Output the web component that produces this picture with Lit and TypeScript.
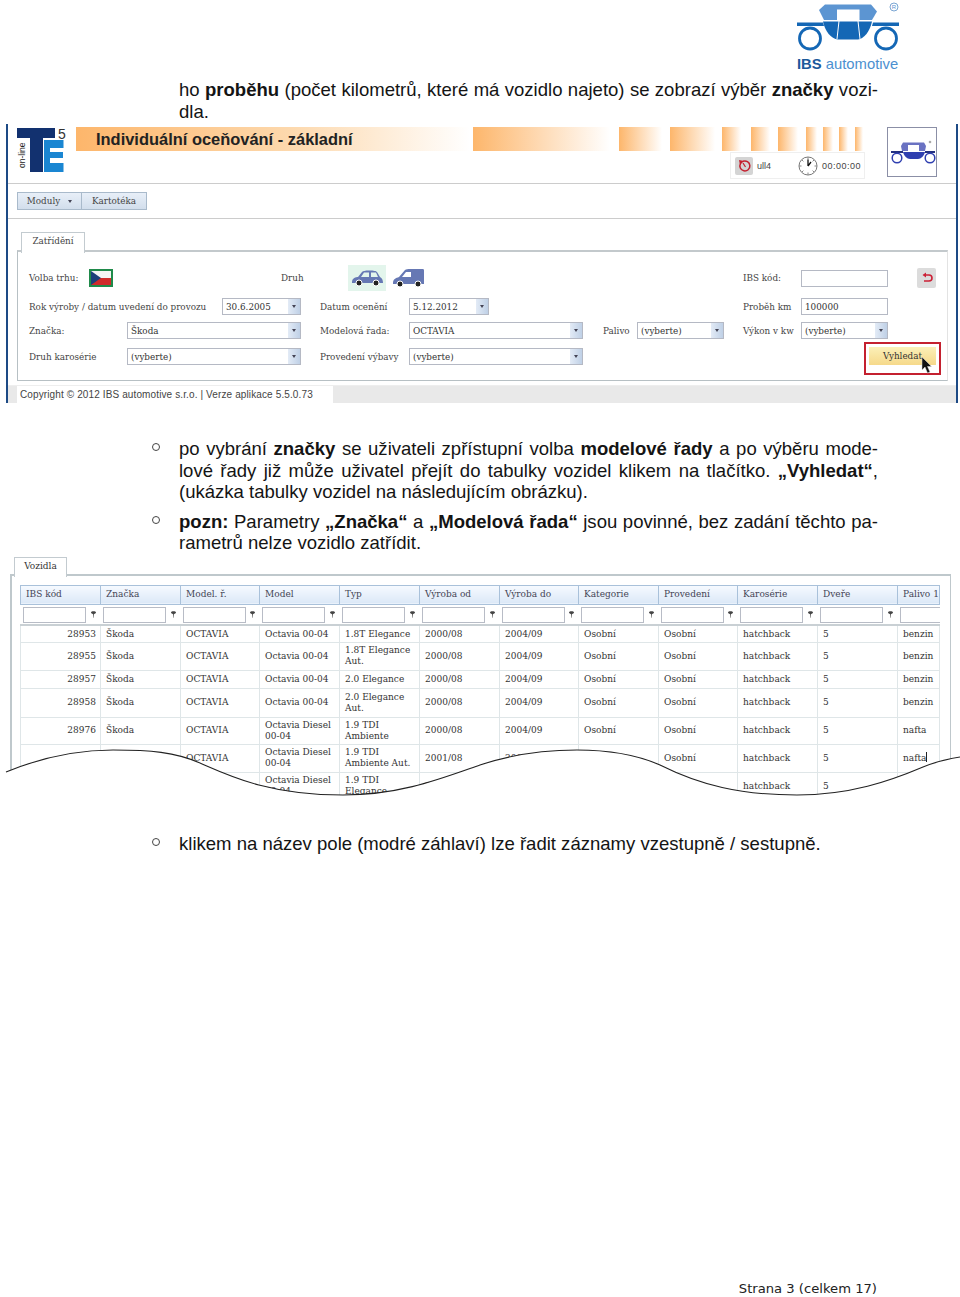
import { LitElement, html, css, svg } from "lit";
import { customElement } from "lit/decorators.js";

const COLS = [80, 80, 79, 80, 80, 80, 79, 80, 79, 80, 80, 42];
const HEAD = ["IBS kód", "Značka", "Model. ř.", "Model", "Typ", "Výroba od", "Výroba do", "Kategorie", "Provedení", "Karosérie", "Dveře", "Palivo 1"];
const ROWS: { h: number; cells: string[] }[] = [
  { h: 17, cells: ["28953", "Škoda", "OCTAVIA", "Octavia 00-04", "1.8T Elegance", "2000/08", "2004/09", "Osobní", "Osobní", "hatchback", "5", "benzin"] },
  { h: 28, cells: ["28955", "Škoda", "OCTAVIA", "Octavia 00-04", "1.8T Elegance\nAut.", "2000/08", "2004/09", "Osobní", "Osobní", "hatchback", "5", "benzin"] },
  { h: 18, cells: ["28957", "Škoda", "OCTAVIA", "Octavia 00-04", "2.0 Elegance", "2000/08", "2004/09", "Osobní", "Osobní", "hatchback", "5", "benzin"] },
  { h: 29, cells: ["28958", "Škoda", "OCTAVIA", "Octavia 00-04", "2.0 Elegance\nAut.", "2000/08", "2004/09", "Osobní", "Osobní", "hatchback", "5", "benzin"] },
  { h: 27, cells: ["28976", "Škoda", "OCTAVIA", "Octavia Diesel\n00-04", "1.9 TDI\nAmbiente", "2000/08", "2004/09", "Osobní", "Osobní", "hatchback", "5", "nafta"] },
  { h: 28, cells: ["28977", "Škoda", "OCTAVIA", "Octavia Diesel\n00-04", "1.9 TDI\nAmbiente Aut.", "2001/08", "2004/09", "Osobní", "Osobní", "hatchback", "5", "nafta"] },
  { h: 28, cells: ["28978", "Škoda", "OCTAVIA", "Octavia Diesel\n00-04", "1.9 TDI\nElegance", "2000/08", "2004/09", "Osobní", "Osobní", "hatchback", "5", "nafta"] },
];
const BARS = [[473, 610], [619, 662], [670, 715], [722, 741], [751, 770], [778, 798], [806, 817], [823, 833], [839, 848], [855, 863]];

const logoLarge = svg`
  <path d="M39 10 L45 4.5 H91 L97 11.5 L92 20 H44 Z" fill="#5c95d2"/>
  <rect x="57" y="9.5" width="22.500" height="11" fill="#fff"/>
  <path d="M43 21.5 H92 C90 31 84 39 78 39.5 H58 C51 39 45 31 43 21.5 Z" fill="#1467b5"/>
  <path d="M59 21 L57 39 M78 21 L80 39" stroke="#fff" stroke-width="1"/>
  <path d="M17 22.5 H43 L44 26 H17 Z M93 22.5 H119 V26 H92 Z" fill="#1467b5"/>
  <circle cx="30" cy="38.500" r="10.500" fill="none" stroke="#1467b5" stroke-width="2.800"/>
  <circle cx="106" cy="38.500" r="10.500" fill="none" stroke="#1467b5" stroke-width="2.800"/>
  <circle cx="114" cy="7" r="4" fill="none" stroke="#7aa6d3" stroke-width="1"/>
  <text x="114" y="9" font-size="6" text-anchor="middle" fill="#5c95d2" font-family="Liberation Sans">R</text>
  <text x="17" y="69" font-size="14.800" font-family="Liberation Sans" fill="#4b90d0"><tspan font-weight="700" fill="#1c5a9b">IBS</tspan> automotive</text>
`;

const logoSmall = svg`
  <path d="M13 18 L15 14.500 H36 L38 18 L37 23 H14 Z" fill="#6a72c2"/>
  <rect x="20" y="17" width="11" height="6" fill="#fff"/>
  <path d="M15 24 H37 C36 28 33 31 30 31 H22 C19 31 16 28 15 24 Z" fill="#2f3fb0"/>
  <path d="M3 23 H15 V25 H3 Z M37 23 H47 V25 H37 Z" fill="#23307f"/>
  <circle cx="9" cy="30" r="4.800" fill="#fff" stroke="#2f3fb0" stroke-width="1.500"/>
  <circle cx="42" cy="30" r="4.800" fill="#fff" stroke="#2f3fb0" stroke-width="1.500"/>
  <circle cx="42" cy="14" r="1.300" fill="#aaa"/>
`;

const funnel = html`<svg class="funnel" width="5" height="7" viewBox="0 0 5 7"><path d="M0 1.500 C0 -0.300 5 -0.300 5 1.500 C5 2.500 3.200 2.800 2.900 3.200 L2.700 6.800 H2.300 L2.100 3.200 C1.800 2.800 0 2.500 0 1.500 Z" fill="#444"/></svg>`;

@customElement("app-root")
export class AppRoot extends LitElement {
  static styles = css`
    :host { display: block; }
    .page { width: 960px; height: 1297px; display: flex; flex-direction: column; background: #fff; color: #141414; font-family: "Liberation Sans", Arial, sans-serif; font-size: 18.55px; line-height: 21.6px; overflow: hidden; }
    .head { height: 79px; display: flex; justify-content: flex-end; padding-right: 50px; box-sizing: border-box; flex: none; }
    .head svg { display: block; }
    .para { margin: 0 82px 0 179px; flex: none; height: 45px; }
    .ln { display: block; text-align: justify; text-align-last: justify; white-space: nowrap; }
    .ln.end { text-align-last: left; }
    b { font-weight: 700; }

    .shot1 { margin-left: 6px; width: 952px; height: 279px; box-sizing: border-box; border-left: 2px solid #1d4a85; border-right: 2px solid #1d4a85; flex: none; font-family: "DejaVu Serif", serif; font-size: 8.8px; color: #444; display: flex; flex-direction: column; }
    .hdr { height: 60px; box-sizing: border-box; border-bottom: 1px solid #ccc; display: flex; padding: 3px 0 0 9px; flex: none; }
    .te { display: block; flex: none; }
    .hdr-mid { margin-left: 9px; width: 787px; flex: none; display: flex; flex-direction: column; }
    .band { display: flex; height: 24px; flex: none; }
    .title { width: 394px; flex: none; box-sizing: border-box; padding-left: 20px; font: 700 16.450px/24px "Liberation Sans", sans-serif; color: #222; background: linear-gradient(90deg, #fdb66b 0%, #fdd9ae 55%, #fff 100%); }
    .bar { flex: none; background: linear-gradient(90deg, #fdb66b, #fff); }
    .timer { align-self: flex-end; margin: 1px -2px 0 0; width: 135px; height: 27px; box-sizing: border-box; border: 1px solid #efefef; display: flex; align-items: center; font: 9px "Liberation Sans", sans-serif; color: #444; letter-spacing: 0.5px; padding-left: 4px; }
    .undo { width: 18px; height: 18px; flex: none; background: #d4d4d4; border-radius: 2px; display: flex; align-items: center; justify-content: center; }
    .user { margin-left: 4px; width: 41px; flex: none; letter-spacing: 0; }
    .clock { flex: none; margin-right: 4px; }
    .mark { margin: 0 0 0 24px; width: 50px; height: 50px; box-sizing: border-box; border: 1px solid #8b8fa6; flex: none; }
    .mark svg { display: block; }

    .tools { height: 35px; box-sizing: border-box; border-bottom: 1px solid #ccc; padding: 8px 0 0 9px; display: flex; flex: none; line-height: 11px; }
    .tools .btn { height: 18px; box-sizing: border-box; border: 1px solid #a9bacb; background: linear-gradient(#e8eff8, #d2deec); display: flex; align-items: center; justify-content: center; gap: 8px; margin-right: -1px; }
    .tri { width: 0; height: 0; border-left: 2.500px solid transparent; border-right: 2.500px solid transparent; border-top: 3px solid #445; display: block; }

    .tabs { height: 31px; box-sizing: border-box; padding: 13px 0 0 13px; display: flex; flex: none; }
    .tab { height: 21px; width: 64px; flex: none; box-sizing: border-box; border: 1px solid #c3cbd0; border-bottom: none; background: #fff; text-align: center; line-height: 17px; position: relative; z-index: 1; }
    .panel { margin-left: 9px; width: 931px; height: 131px; box-sizing: border-box; border: 1px solid #b7c0c4; border-top: 2px solid #c3c9cc; border-right-color: #e3e3e3; padding: 13px 0 0 11px; flex: none; display: grid; grid-template-columns: 98px 95px 79px 19px 89px 80px 94px 20px 34px 87px 19px 58px 87px 29px 19px; grid-template-rows: 26px 31px 17px 35px; align-items: center; line-height: 12px; }
    .flag { display: block; }
    .cars { display: flex; align-items: center; gap: 6px; }
    .car-on { width: 38px; height: 26px; background: #e3f5ec; display: flex; align-items: center; justify-content: center; flex: none; }
    .field { height: 17px; box-sizing: border-box; border: 1px solid #b5b9c4; background: #fff; display: flex; align-items: center; padding-left: 3px; color: #333; overflow: hidden; }
    .combo { padding-right: 0; justify-content: space-between; }
    .arr { width: 12px; height: 17px; flex: none; background: linear-gradient(90deg, #e3ebf6, #bfd0e6); display: flex; align-items: center; justify-content: center; }
    .back { width: 19px; height: 20px; background: #dcdcdc; border-radius: 2px; display: flex; align-items: center; justify-content: center; }
    .redbox { position: relative; align-self: start; margin: 3px -5px 0 63px; height: 33px; box-sizing: border-box; border: 2px solid #c4202f; padding: 3px; }
    .find { height: 18px; background: linear-gradient(#fbf0b8, #f6d98a); text-align: center; line-height: 18px; color: #333; }
    .cursor { position: absolute; left: 55px; top: 13px; }

    .gap1 { height: 4px; flex: none; }
    .foot1 { height: 18px; background: #e9e9e9; border-top: 1px solid #eee; box-sizing: border-box; padding-left: 9px; flex: none; display: flex; }
    .copy { width: 316px; background: #fff; padding-left: 3px; box-sizing: border-box; font: 10px/18px "Liberation Sans", sans-serif; letter-spacing: 0.12px; color: #444; }

    .items { list-style: none; margin: 35px 82px 0 0; padding: 0; flex: none; }
    .items li { display: flex; margin-bottom: 8px; }
    .items li:last-child { margin-bottom: 0; }
    .mk { width: 152px; flex: none; box-sizing: border-box; text-align: right; font-size: 13px; }
    .mk span { display: inline-block; width: 8px; height: 8px; box-sizing: border-box; border: 1px solid #444; border-radius: 50%; margin: 0 -8px 2px 0; }
    .tx { margin-left: 27px; flex: 1; min-width: 0; }

    .shot2 { position: relative; margin-top: 3px; height: 243px; flex: none; overflow: hidden; font-family: "DejaVu Serif", serif; font-size: 9px; color: #333; line-height: 11px; }
    .tab2 { margin-left: 14px; width: 53px; height: 20px; box-sizing: border-box; border: 1px solid #c3cbd0; border-bottom: none; text-align: center; line-height: 17px; position: relative; z-index: 1; background: #fff; }
    .panel2 { margin: -3px 0 0 10px; width: 941px; height: 240px; box-sizing: border-box; border: 1px solid #bfc8cc; border-top-width: 2px; border-left-width: 2px; padding: 9px 0 0 8px; }
    table { table-layout: fixed; border-collapse: collapse; width: 920px; }
    th { height: 19px; box-sizing: border-box; padding: 0 5px; text-align: left; font-weight: 400; background: linear-gradient(#f6faff, #dbe8f7); border: 1px solid #a9c1da; white-space: nowrap; overflow: hidden; color: #445; }
    td { box-sizing: border-box; padding: 0 5px; border: 1px solid #dfe6e8; white-space: pre; overflow: hidden; }
    td.num { text-align: right; padding-right: 4px; }
    .frow td { height: 21px; padding: 0 2px 0 2.500px; border-bottom: 2px solid #c9d0d4; border-left: none; border-right: none; }
    .fcell { display: flex; align-items: center; justify-content: space-between; padding-right: 3px; }
    .fcell i { display: block; width: 63px; height: 16px; box-sizing: border-box; border: 1px solid #b8bcc6; background: #fff; flex: none; }
    .funnel { display: block; flex: none; }
    .caret { display: inline-block; width: 1px; height: 10px; background: #222; vertical-align: -1px; }
    .wave { position: absolute; left: 0; top: 180px; display: block; }

    .items3 { margin-top: 33px; }
    .foot { margin-top: auto; padding: 0 83px 0 0; text-align: right; font: 13.150px/17px "DejaVu Sans", sans-serif; height: 17px; flex: none; color: #222; }
  `;

  private combo(v: string) {
    return html`<div class="field combo"><span>${v}</span><span class="arr"><span class="tri"></span></span></div>`;
  }

  private form() {
    const g = (c: string, r: number) => `grid-column:${c};grid-row:${r}`;
    return html`
      <div style=${g("1", 1)}>Volba trhu:</div>
      <svg class="flag" style=${g("1 / 3", 1) + ";margin-left:60px"} width="24" height="18" viewBox="0 0 24 18"><rect width="24" height="18" fill="#1f8a4a"/><rect x="2" y="2" width="20" height="7" fill="#f4f4f4"/><rect x="2" y="9" width="20" height="7" fill="#cf2a2a"/><path d="M2 2 L12 9 L2 16 Z" fill="#1c3f7a"/></svg>
      <div style=${g("3 / 5", 1) + ";margin-left:59px"}>Druh</div>
      <div class="cars" style=${g("5 / 8", 1) + ";margin-left:28px"}>
        <span class="car-on"><svg width="33" height="18" viewBox="0 0 33 18"><path d="M1 13 C1 9 5 8 7 8 L11 3 C12 2 14 1.500 18 1.500 C23 1.500 25 2 26 3 L29 8 C31 9 32 11 32 14 L1 14 Z" fill="#6678b4"/><path d="M10 8 L13 3.500 H18 V8 Z M20 3.500 H25 L27 8 H20 Z" fill="#e3f5ec"/><circle cx="8" cy="14" r="3" fill="#222" stroke="#fff"/><circle cx="25" cy="14" r="3" fill="#222" stroke="#fff"/></svg></span>
        <svg width="33" height="20" viewBox="0 0 33 20"><path d="M1 15 C1 11 4 10 7 9 L13 2 C14 1 16 1 18 1 H31 C32 1 32 2 32 3 V16 H1 Z" fill="#6678b4"/><path d="M10 9 L14 4 H19 V9 Z" fill="#fff"/><circle cx="8" cy="16" r="3" fill="#222" stroke="#fff"/><circle cx="26" cy="16" r="3" fill="#222" stroke="#fff"/></svg>
      </div>
      <div style=${g("12", 1)}>IBS kód:</div>
      <div class="field" style=${g("13", 1)}></div>
      <div class="back" style=${g("15", 1)}><svg width="12" height="12" viewBox="0 0 12 12"><path d="M4 3 H8 A3 3 0 0 1 8 9 H3" fill="none" stroke="#cc2036" stroke-width="1.600"/><path d="M5 0.500 L1.500 3 L5 5.500 Z" fill="#cc2036"/></svg></div>

      <div style=${g("1 / 3", 2) + ";white-space:nowrap"}>Rok výroby / datum uvedení do provozu</div>
      <div style=${g("3", 2)}>${this.combo("30.6.2005")}</div>
      <div style=${g("5", 2)}>Datum ocenění</div>
      <div style=${g("6", 2)}>${this.combo("5.12.2012")}</div>
      <div style=${g("12", 2)}>Proběh km</div>
      <div class="field" style=${g("13", 2)}>100000</div>

      <div style=${g("1", 3)}>Značka:</div>
      <div style=${g("2 / 4", 3)}>${this.combo("Škoda")}</div>
      <div style=${g("5", 3)}>Modelová řada:</div>
      <div style=${g("6 / 8", 3)}>${this.combo("OCTAVIA")}</div>
      <div style=${g("9", 3)}>Palivo</div>
      <div style=${g("10", 3)}>${this.combo("(vyberte)")}</div>
      <div style=${g("12", 3) + ";white-space:nowrap"}>Výkon v kw</div>
      <div style=${g("13", 3)}>${this.combo("(vyberte)")}</div>

      <div style=${g("1", 4)}>Druh karosérie</div>
      <div style=${g("2 / 4", 4)}>${this.combo("(vyberte)")}</div>
      <div style=${g("5", 4)}>Provedení výbavy</div>
      <div style=${g("6 / 8", 4)}>${this.combo("(vyberte)")}</div>
      <div class="redbox" style=${g("13 / 16", 4)}>
        <div class="find">Vyhledat</div>
        <svg class="cursor" width="12" height="17" viewBox="0 0 12 17"><path d="M1 0 V13 L4 10 L6.500 16 L9 15 L6.500 9.500 L10.500 9.500 Z" fill="#111" stroke="#ddd" stroke-width="0.500"/></svg>
      </div>
    `;
  }

  private table() {
    return html`<table>
      <colgroup>${COLS.map((w) => html`<col style="width:${w}px" />`)}</colgroup>
      <thead><tr>${HEAD.map((h) => html`<th>${h}</th>`)}</tr></thead>
      <tbody>
        <tr class="frow">${COLS.map(() => html`<td><div class="fcell"><i></i>${funnel}</div></td>`)}</tr>
        ${ROWS.map((r, ri) => html`<tr>${r.cells.map((c, i) => html`<td class=${i === 0 ? "num" : ""} style="height:${r.h}px">${c}${ri === 5 && i === 11 ? html`<span class="caret"></span>` : ""}</td>`)}</tr>`)}
      </tbody>
    </table>`;
  }

  render() {
    return html`<div class="page">
      <div class="head">
        <svg width="130" height="74" viewBox="0 0 130 74">${logoLarge}</svg>
      </div>
      <div class="para">
        <span class="ln">ho <b>proběhu</b> (počet kilometrů, které má vozidlo najeto) se zobrazí výběr <b>značky</b> vozi-</span>
        <span class="ln end">dla.</span>
      </div>

      <div class="shot1">
        <div class="hdr">
          <svg class="te" width="50" height="46" viewBox="0 0 50 46">
            <path d="M0 1 H38 V11 H26 V45 H13 V11 H0 Z" fill="#12316f"/>
            <path d="M27 13 H46.500 V21 H33 V25 H46 V31 H33 V36 H46.500 V45 H27 Z" fill="#1a86d2"/>
            <text x="41" y="11.500" font-size="14" fill="#333" font-family="Liberation Sans">5</text>
            <text transform="translate(8 41) rotate(-90)" font-size="8.500" fill="#222" font-family="Liberation Sans">on-line</text>
          </svg>
          <div class="hdr-mid">
            <div class="band">
              <div class="title">Individuální oceňování - základní</div>
              ${BARS.map(([a, b], i) => html`<div class="bar" style="margin-left:${a - (i ? BARS[i - 1][1] : 470)}px;width:${b - a}px"></div>`)}
            </div>
            <div class="timer">
              <span class="undo"><svg width="14" height="14" viewBox="0 0 14 14"><path d="M3.500 4.500 A5 5 0 1 0 6 2.300" fill="none" stroke="#c4202f" stroke-width="1.500"/><path d="M2 1 L7 2 L3 6 Z" fill="#c4202f"/><path d="M6 4 L8.500 8" stroke="#c4202f" stroke-width="1.200"/></svg></span>
              <span class="user">ull4</span>
              <svg class="clock" width="20" height="20" viewBox="0 0 20 20"><circle cx="10" cy="10" r="9" fill="#fff" stroke="#555" stroke-width="0.800"/><path d="M10 1.500 V3.500 M10 16.500 V18.500 M1.500 10 H3.500 M16.500 10 H18.500 M4 4 L5.400 5.400 M16 4 L14.600 5.400 M4 16 L5.400 14.600 M16 16 L14.600 14.600" stroke="#555" stroke-width="0.700"/><path d="M10 10 V3.500 M10 10 L13 6" stroke="#111" stroke-width="1.300"/></svg>
              <span>00:00:00</span>
            </div>
          </div>
          <div class="mark"><svg width="48" height="48" viewBox="0 0 48 48">${logoSmall}</svg></div>
        </div>
        <div class="tools">
          <div class="btn" style="width:65px"><span>Moduly</span><span class="tri"></span></div>
          <div class="btn" style="width:66px"><span>Kartotéka</span></div>
        </div>
        <div class="tabs"><div class="tab">Zatřídění</div></div>
        <div class="panel">${this.form()}</div>
        <div class="gap1"></div>
        <div class="foot1"><div class="copy">Copyright © 2012 IBS automotive s.r.o. | Verze aplikace 5.5.0.73</div></div>
      </div>

      <ul class="items">
        <li>
          <div class="mk"><span></span></div>
          <div class="tx">
            <span class="ln">po vybrání <b>značky</b> se uživateli zpřístupní volba <b>modelové řady</b> a po výběru mode-</span>
            <span class="ln">lové řady již může uživatel přejít do tabulky vozidel klikem na tlačítko. <b>„Vyhledat“</b>,</span>
            <span class="ln end">(ukázka tabulky vozidel na následujícím obrázku).</span>
          </div>
        </li>
        <li>
          <div class="mk"><span></span></div>
          <div class="tx">
            <span class="ln"><b>pozn:</b> Parametry <b>„Značka“</b> a <b>„Modelová řada“</b> jsou povinné, bez zadání těchto pa-</span>
            <span class="ln end">rametrů nelze vozidlo zatřídit.</span>
          </div>
        </li>
      </ul>

      <div class="shot2">
        <div class="tab2">Vozidla</div>
        <div class="panel2">${this.table()}</div>
        <svg class="wave" width="960" height="63" viewBox="0 180 960 63"><path d="M6 215 C40 201 75 193 113 193 C150 193 175 195 200 206 C232 220 270 238 343 238 C400 238 440 222 480 208 C510 198 540 193 577 193 C610 193 635 197 660 208 C700 228 740 238 797 238 C850 238 890 224 923 210 C935 205 948 202 960 200 V243 H0 V217 Z" fill="#fff"/><path d="M6 215 C40 201 75 193 113 193 C150 193 175 195 200 206 C232 220 270 238 343 238 C400 238 440 222 480 208 C510 198 540 193 577 193 C610 193 635 197 660 208 C700 228 740 238 797 238 C850 238 890 224 923 210 C935 205 948 202 960 200" fill="none" stroke="#222" stroke-width="1.100"/></svg>
      </div>

      <ul class="items items3">
        <li>
          <div class="mk"><span></span></div>
          <div class="tx"><span class="ln end">klikem na název pole (modré záhlaví) lze řadit záznamy vzestupně / sestupně.</span></div>
        </li>
      </ul>

      <div class="foot">Strana 3 (celkem 17)</div>
    </div>`;
  }
}
